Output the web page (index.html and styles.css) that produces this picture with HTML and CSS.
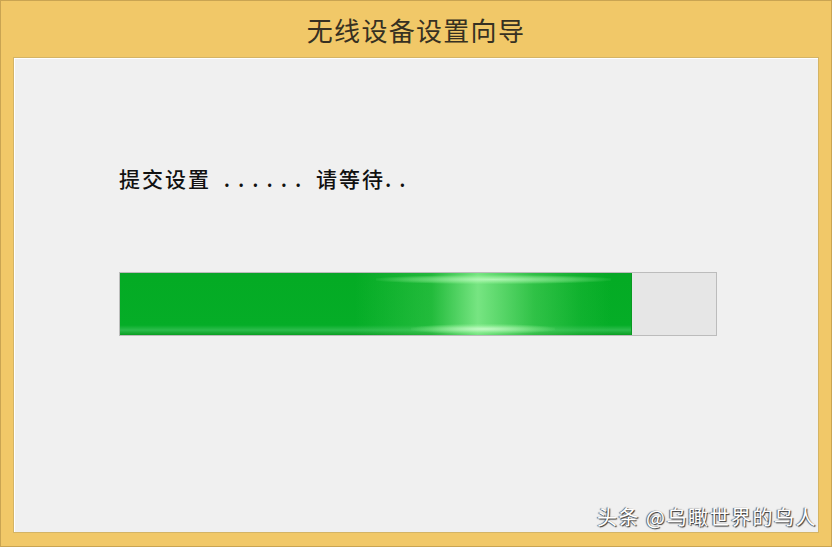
FILE: index.html
```html
<!DOCTYPE html>
<html lang="zh-CN">
<head>
    <meta charset="UTF-8">
    <title>无线设备设置向导</title>
    <link rel="stylesheet" href="styles.css">
</head>
<body>
    <div class="window">
        <div class="title">无线设备设置向导</div>
        <div class="panel">
            <p class="status">提交设置 <span class="dots">......</span> 请等待<span class="dots-short">..</span></p>
            <div class="progress">
                <div class="progress-fill" style="width: 85.8%;">
                    <div class="shine"></div>
                    <div class="glow-top"></div>
                    <div class="glow-bottom"></div>
                </div>
            </div>
            <div class="watermark">头条 @乌瞰世界的鸟人</div>
        </div>
    </div>
</body>
</html>
```

FILE: styles.css
```css
html, body {
    margin: 0;
    padding: 0;
}
body {
    width: 832px;
    height: 547px;
    overflow: hidden;
    font-family: "Noto Sans CJK SC", "Noto Sans", sans-serif;
}
.window {
    box-sizing: border-box;
    width: 832px;
    height: 547px;
    background-color: #f1c868;
    border: 1px solid #c9a452;
    padding: 0 12px 13px 12px;
    display: flex;
    flex-direction: column;
}
.title {
    height: 56px;
    line-height: 58px;
    text-align: center;
    font-size: 26px;
    color: #363022;
    letter-spacing: 1.3px;
}
.panel {
    position: relative;
    flex: 1;
    background-color: #f0f0f0;
    border: 1px solid #d4b466;
    box-shadow: inset 1px 1px 0 #ffffff;
    padding: 0 0 0 105px;
}
.status {
    margin: 92px 0 0 0;
    font-size: 21px;
    font-weight: 500;
    color: #111;
    letter-spacing: 2px;
    line-height: 56px;
    white-space: pre;
}
.dots {
    letter-spacing: 8px;
    margin-left: 6px;
}
.dots-short {
    letter-spacing: 8px;
}
.progress {
    box-sizing: border-box;
    width: 598px;
    height: 64px;
    margin-top: 66px;
    border: 1px solid #bcbcbc;
    background-color: #e6e6e6;
}
.progress-fill {
    position: relative;
    height: 100%;
    background: linear-gradient(to bottom, #08a528 0%, #04ab24 8%, #05ad27 84%, #2cbd4c 92%, #0a9e22 100%);
    border-right: 1px solid #0a9a22;
    overflow: hidden;
}
.shine {
    position: absolute;
    left: 46%;
    top: 0;
    width: 50%;
    height: 100%;
    background: linear-gradient(to right, rgba(120,230,130,0) 0%, rgba(90,215,100,0.35) 30%, rgba(125,232,135,0.95) 48%, rgba(100,220,110,0.45) 70%, rgba(60,200,80,0.2) 88%, rgba(120,230,130,0) 100%);
}
.glow-top {
    position: absolute;
    left: 50%;
    top: 2px;
    width: 46%;
    height: 9px;
    background: radial-gradient(ellipse at center, rgba(200,255,200,0.75) 0%, rgba(170,250,170,0.35) 50%, rgba(170,250,170,0) 75%);
}
.glow-bottom {
    position: absolute;
    left: 57%;
    bottom: 1px;
    width: 28%;
    height: 10px;
    background: radial-gradient(ellipse at center, rgba(210,255,210,0.85) 0%, rgba(170,250,170,0.35) 50%, rgba(170,250,170,0) 75%);
}
.watermark {
    position: absolute;
    right: 1px;
    bottom: 0;
    font-size: 20px;
    color: #ffffff;
    letter-spacing: 1.5px;
    text-shadow: 1px 1px 1px #333, -1px 0 1px #555;
    line-height: 30px;
}
```
